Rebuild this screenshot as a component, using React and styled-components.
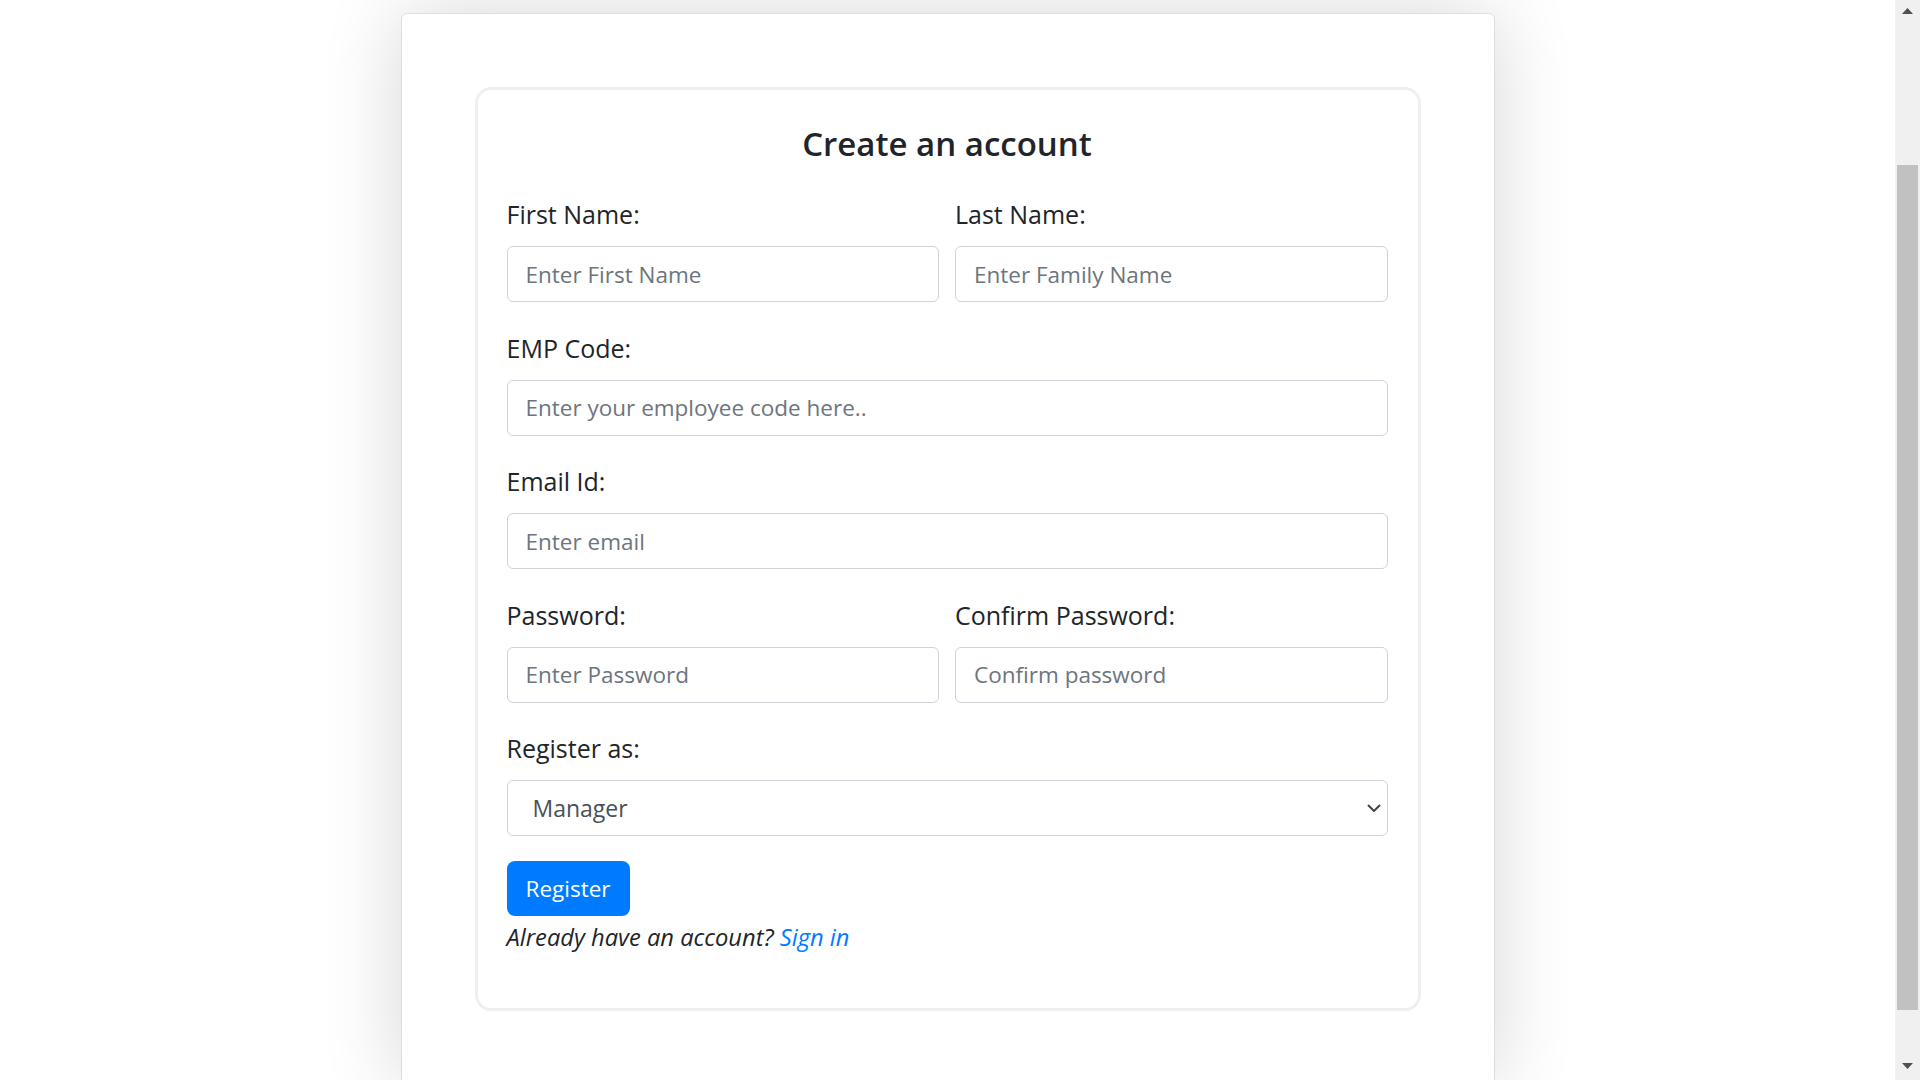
import styled, { createGlobalStyle } from 'styled-components'

const GlobalStyle = createGlobalStyle`
  body {
    margin: 0;
    background: #fff;
    color: #212529;
    font-family: 'Open Sans', 'Noto Sans', sans-serif;
  }
`

const Page = styled.div`
  padding: 13px 25px 55px 0;
`

const Sheet = styled.div`
  width: 1094px;
  box-sizing: border-box;
  margin: 0 auto;
  padding: 73px;
  background: #fff;
  border: 1px solid #dedede;
  border-radius: 6px;
  box-shadow: 0 0 80px rgba(0, 0, 0, 0.16);
`

const Card = styled.form`
  border: 3px solid #efefef;
  border-radius: 16px;
  padding: 33px 30px 53px 29px;
`

const Title = styled.h2`
  margin: 0 0 32px;
  text-align: center;
  font-size: 33px;
  line-height: 41px;
  font-weight: 600;
  color: #212529;
`

const Row = styled.div`
  display: grid;
  grid-template-columns: 1fr 1fr;
  column-gap: 16px;
`

const Group = styled.div`
  margin-bottom: ${p => (p.$last ? 25 : 27.5)}px;
`

const Label = styled.label`
  display: block;
  margin-bottom: 14px;
  font-size: 25px;
  line-height: 36px;
  color: #212529;
`

const Input = styled.input`
  display: block;
  width: 100%;
  height: 56px;
  box-sizing: border-box;
  padding: 0 18px;
  border: 1px solid #ced4da;
  border-radius: 6px;
  font-family: inherit;
  font-size: 22.5px;
  color: #495057;
  background: #fff;
  outline: none;

  &::placeholder {
    color: #6c757d;
  }
`

const SelectWrap = styled.div`
  position: relative;
`

const Select = styled.select`
  display: block;
  width: 100%;
  height: 56px;
  box-sizing: border-box;
  padding: 0 40px 0 25px;
  border: 1px solid #ced4da;
  border-radius: 6px;
  font-family: inherit;
  font-size: 23px;
  color: #495057;
  background: #fff;
  appearance: none;
  outline: none;
`

const Chevron = styled.svg`
  position: absolute;
  right: 7px;
  top: 24px;
  pointer-events: none;
`

const Button = styled.button`
  display: block;
  height: 55px;
  padding: 0 19px;
  border: none;
  border-radius: 8px;
  background: #007bff;
  color: #fff;
  font-family: inherit;
  font-size: 22.5px;
  cursor: pointer;
`

const Note = styled.p`
  margin: 3px 0 0;
  font-size: 23.7px;
  line-height: 36px;
  font-style: italic;
  color: #212529;

  a {
    color: #007bff;
    text-decoration: none;
  }
`

const ScrollRail = styled.div`
  position: fixed;
  top: 0;
  right: 0;
  bottom: 0;
  width: 25px;
  display: flex;
  flex-direction: column;
  background: #f0f0f0;
`

const RailArrow = styled.div`
  height: 25px;
  display: flex;
  justify-content: center;
  align-items: ${p => (p.$down ? 'flex-end' : 'flex-start')};
  padding: ${p => (p.$down ? '0 0 11px' : '8px 0 0')};
  box-sizing: border-box;
`

const RailTrack = styled.div`
  flex: 1;
  padding: 140px 2px 0;
`

const RailThumb = styled.div`
  height: 845px;
  background: #c1c1c1;
`

export default function App() {
  return (
    <>
      <GlobalStyle />
      <Page>
        <Sheet>
          <Card onSubmit={e => e.preventDefault()}>
            <Title>Create an account</Title>

            <Row>
              <Group>
                <Label>First Name:</Label>
                <Input type='text' placeholder='Enter First Name' />
              </Group>
              <Group>
                <Label>Last Name:</Label>
                <Input type='text' placeholder='Enter Family Name' />
              </Group>
            </Row>

            <Group>
              <Label>EMP Code:</Label>
              <Input type='text' placeholder='Enter your employee code here..' />
            </Group>

            <Group>
              <Label>Email Id:</Label>
              <Input type='email' placeholder='Enter email' />
            </Group>

            <Row>
              <Group>
                <Label>Password:</Label>
                <Input type='password' placeholder='Enter Password' />
              </Group>
              <Group>
                <Label>Confirm Password:</Label>
                <Input type='password' placeholder='Confirm password' />
              </Group>
            </Row>

            <Group $last>
              <Label>Register as:</Label>
              <SelectWrap>
                <Select defaultValue='manager'>
                  <option value='manager'>Manager</option>
                  <option value='employee'>Employee</option>
                </Select>
                <Chevron width='14' height='8' viewBox='0 0 14 8'>
                  <polyline points='1,1 7,7 13,1' fill='none' stroke='#444' strokeWidth='2' />
                </Chevron>
              </SelectWrap>
            </Group>

            <Button type='submit'>Register</Button>
            <Note>
              Already have an account? <a href='#'>Sign in</a>
            </Note>
          </Card>
        </Sheet>
      </Page>

      <ScrollRail>
        <RailArrow>
          <svg width='11' height='6' viewBox='0 0 11 6'>
            <path d='M0 6 L5.5 0 L11 6 Z' fill='#505050' />
          </svg>
        </RailArrow>
        <RailTrack>
          <RailThumb />
        </RailTrack>
        <RailArrow $down>
          <svg width='11' height='6' viewBox='0 0 11 6'>
            <path d='M0 0 L5.5 6 L11 0 Z' fill='#505050' />
          </svg>
        </RailArrow>
      </ScrollRail>
    </>
  )
}
